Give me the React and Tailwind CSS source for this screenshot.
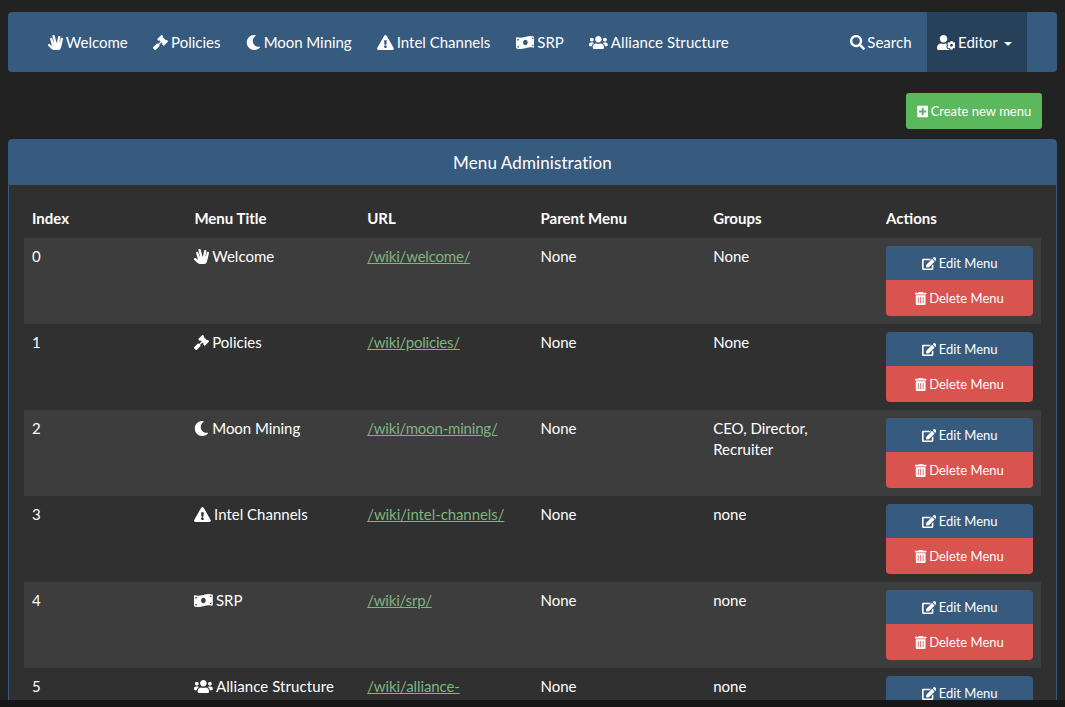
import React from "react";
import {
  FaHandSpock,
  FaGavel,
  FaMoon,
  FaExclamationTriangle,
  FaMoneyBillWave,
  FaUsers,
  FaSearch,
  FaUserCog,
  FaPlusSquare,
  FaEdit,
  FaTrashAlt,
} from "react-icons/fa";

// Icon glyphs differ in width; each carries its own ratio to the 1em height.
const menus = [
  { icon: FaHandSpock, width: "w-[1em]", title: "Welcome", url: "/wiki/welcome/", groups: "None" },
  { icon: FaGavel, width: "w-[1em]", title: "Policies", url: "/wiki/policies/", groups: "None" },
  { icon: FaMoon, width: "w-[1em]", title: "Moon Mining", url: "/wiki/moon-mining/", groups: "CEO, Director, Recruiter", tracking: "tracking-[-0.05px]" },
  { icon: FaExclamationTriangle, width: "w-[1.125em]", title: "Intel Channels", url: "/wiki/intel-channels/", groups: "none", urlTracking: "tracking-[-0.08px]" },
  { icon: FaMoneyBillWave, width: "w-[1.25em]", title: "SRP", url: "/wiki/srp/", groups: "none" },
  { icon: FaUsers, width: "w-[1.25em]", title: "Alliance Structure", url: "/wiki/alliance-structure/", groups: "none", tracking: "tracking-[0.09px]", urlTracking: "tracking-[-0.1px]" },
];

const columns = "grid grid-cols-[162.4px_172.8px_173.3px_172.7px_172.9px_1fr]";

function Label({ icon: Icon, width = "w-[1em]", tracking = "", children }) {
  return (
    <span className={`whitespace-nowrap ${tracking}`}>
      <Icon className={`mr-[0.19em] inline-block h-[1em] align-[-0.125em] ${width}`} />
      {children}
    </span>
  );
}

function NavBar() {
  return (
    <nav className="flex h-[60px] shrink-0 items-stretch rounded bg-[#375a7f] pr-[30px] pl-10">
      <ul className="flex items-center gap-[25.4px] pt-[2px]">
        {menus.map((m) => (
          <li key={m.title}>
            <Label icon={m.icon} width={m.width} tracking={m.tracking}>{m.title}</Label>
          </li>
        ))}
      </ul>
      <ul className="ml-auto flex items-stretch">
        <li className="flex items-center pt-[2px] pr-[15.5px] pl-[15px]">
          <Label icon={FaSearch}>Search</Label>
        </li>
        <li className="flex w-[100px] items-center bg-[#28415b] pt-[2px] pl-[9.5px]">
          <Label icon={FaUserCog} width="w-[1.25em]">Editor</Label>
          <span className="mt-px ml-[6px] border-x-4 border-t-4 border-x-transparent border-t-white" />
        </li>
      </ul>
    </nav>
  );
}

function MenuRow({ menu, index }) {
  return (
    <div className={`${columns} h-[86px] shrink-0 ${index % 2 ? "" : "bg-[#3d3d3d]"}`}>
      <div className="p-2">{index}</div>
      <div className="p-2">
        <Label icon={menu.icon} width={menu.width} tracking={menu.tracking}>{menu.title}</Label>
      </div>
      <div className="p-2 pr-6">
        <a className={`text-[#7fb57f] underline ${menu.urlTracking || "tracking-[-0.2px]"}`}>{menu.url}</a>
      </div>
      <div className="p-2">None</div>
      <div className="p-2 pr-6">{menu.groups}</div>
      <div className="p-2 text-[13px]">
        <div className="w-[147px] overflow-hidden rounded">
          <div className="flex h-[34px] items-center justify-center bg-[#375a7f] pt-[2px]">
            <Label icon={FaEdit} width="w-[1.125em]">Edit Menu</Label>
          </div>
          <div className="flex h-9 items-center justify-center bg-[#d9534f] pt-[2px]">
            <Label icon={FaTrashAlt} width="w-[0.875em]">Delete Menu</Label>
          </div>
        </div>
      </div>
    </div>
  );
}

export default function App() {
  return (
    <div className="flex h-[707px] w-[1065px] flex-col overflow-hidden bg-[#222222] font-[Lato,sans-serif] text-[15px] leading-[21.4px] text-white">
      <div className="flex min-h-0 flex-1 flex-col overflow-hidden px-2 pt-3">
        <NavBar />
        <div className="mt-[21px] mr-[15px] flex shrink-0 justify-end">
          <button className="flex h-9 w-[136px] items-center justify-center rounded-[3px] bg-[#5cb85c] pt-[2px] text-[13px]">
            <Label icon={FaPlusSquare} width="w-[0.875em]">Create new menu</Label>
          </button>
        </div>
        <section className="mt-[10px] shrink-0 rounded border border-[#375a7f] bg-[#303030]">
          <header className="flex h-[45px] items-center justify-center bg-[#375a7f] text-[17px] tracking-[0.1px]">
            Menu Administration
          </header>
          <div className="px-[15px] pt-[15px]">
            <div className={`${columns} h-[38px] font-bold`}>
              {["Index", "Menu Title", "URL", "Parent Menu", "Groups", "Actions"].map((h) => (
                <div key={h} className="p-2">{h}</div>
              ))}
            </div>
            {menus.map((m, i) => (
              <MenuRow key={m.title} menu={m} index={i} />
            ))}
          </div>
        </section>
      </div>
      <div className="h-[7px] shrink-0 bg-[#171717]" />
    </div>
  );
}
